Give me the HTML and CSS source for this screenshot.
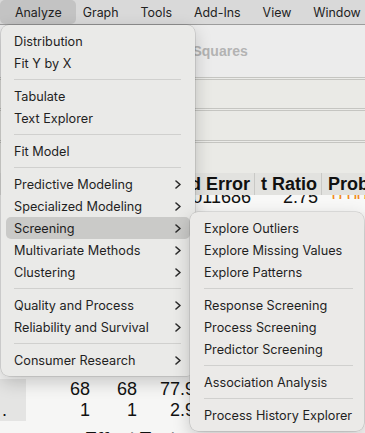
FILE: index.html
```html
<!DOCTYPE html>
<html>
<head>
<meta charset="utf-8">
<link rel="stylesheet" href="styles.css">
</head>
<body>
<div class="screen">
  <div class="menubar">
    <span class="mb-item active">Analyze</span>
    <span class="mb-item">Graph</span>
    <span class="mb-item">Tools</span>
    <span class="mb-item">Add-Ins</span>
    <span class="mb-item">View</span>
    <span class="mb-item">Window</span>
  </div>

  <div class="report">
    <div class="title">Fit Least Squares</div>
    <div class="rule"></div>
    <div class="band b1"></div>
    <div class="rule"></div>
    <div class="band b2"></div>
    <div class="rule"></div>
    <div class="band b3"></div>
    <div class="thead cols">
      <div class="c1">Std Error</div>
      <div class="c2">t Ratio</div>
      <div class="c3">Prob&gt;|t|</div>
    </div>
    <div class="vrow">
      <div class="cols vals">
        <div class="c1">0.011686</div>
        <div class="c2">2.75</div>
        <div class="c3 orange">0.0074*</div>
      </div>
    </div>
    <div class="filler"></div>
    <div class="rows">
      <div class="row">
        <div class="lab"></div>
        <div class="n n1">68</div>
        <div class="n n2">68</div>
        <div class="n n3">77.9</div>
      </div>
      <div class="row">
        <div class="lab">.</div>
        <div class="n n1">1</div>
        <div class="n n2">1</div>
        <div class="n n3">2.9</div>
      </div>
    </div>
    <div class="heading"><span class="tri"></span>Effect Tests</div>
  </div>

  <div class="menu main-menu">
    <div class="item">Distribution</div>
    <div class="item">Fit Y by X</div>
    <div class="sep"></div>
    <div class="item">Tabulate</div>
    <div class="item">Text Explorer</div>
    <div class="sep"></div>
    <div class="item">Fit Model</div>
    <div class="sep"></div>
    <div class="item">Predictive Modeling<svg class="chev" width="6" height="9" viewBox="0 0 6 9"><polyline points="1,1 5,4.5 1,8"/></svg></div>
    <div class="item">Specialized Modeling<svg class="chev" width="6" height="9" viewBox="0 0 6 9"><polyline points="1,1 5,4.5 1,8"/></svg></div>
    <div class="item selected">Screening<svg class="chev" width="6" height="9" viewBox="0 0 6 9"><polyline points="1,1 5,4.5 1,8"/></svg></div>
    <div class="item">Multivariate Methods<svg class="chev" width="6" height="9" viewBox="0 0 6 9"><polyline points="1,1 5,4.5 1,8"/></svg></div>
    <div class="item">Clustering<svg class="chev" width="6" height="9" viewBox="0 0 6 9"><polyline points="1,1 5,4.5 1,8"/></svg></div>
    <div class="sep"></div>
    <div class="item">Quality and Process<svg class="chev" width="6" height="9" viewBox="0 0 6 9"><polyline points="1,1 5,4.5 1,8"/></svg></div>
    <div class="item">Reliability and Survival<svg class="chev" width="6" height="9" viewBox="0 0 6 9"><polyline points="1,1 5,4.5 1,8"/></svg></div>
    <div class="sep"></div>
    <div class="item">Consumer Research<svg class="chev" width="6" height="9" viewBox="0 0 6 9"><polyline points="1,1 5,4.5 1,8"/></svg></div>
  </div>

  <div class="menu sub-menu">
    <div class="item">Explore Outliers</div>
    <div class="item">Explore Missing Values</div>
    <div class="item">Explore Patterns</div>
    <div class="sep"></div>
    <div class="item">Response Screening</div>
    <div class="item">Process Screening</div>
    <div class="item">Predictor Screening</div>
    <div class="sep"></div>
    <div class="item">Association Analysis</div>
    <div class="sep"></div>
    <div class="item">Process History Explorer</div>
  </div>
</div>
</body>
</html>
```

FILE: styles.css
```css
* { box-sizing: border-box; }

html, body {
  margin: 0;
  padding: 0;
}

body {
  font-family: "Liberation Sans", Arial, sans-serif;
  background: #f6f6f5;
}

.screen {
  position: relative;
  width: 365px;
  height: 433px;
  overflow: hidden;
  background: #f6f6f5;
}

/* ---------- menu bar ---------- */
.menubar {
  display: flex;
  height: 25px;
  background: #d9d9d9;
  border-bottom: 1px solid #9c9c9c;
  font-family: Inter, "Noto Sans", sans-serif;
  font-size: 12.4px;
  color: #222;
}

.mb-item {
  display: block;
  height: 24px;
  line-height: 24px;
  padding: 1px 11px 0;
  white-space: nowrap;
}

.mb-item.active {
  padding: 1px 14px 0 15px;
  margin-right: -4px;
  background: #c3c3c3;
  border-radius: 5px;
}

/* ---------- report background ---------- */
.report {
  display: flex;
  flex-direction: column;
}

.title {
  height: 52px;
  line-height: 52px;
  padding-left: 131px;
  background: #ececec;
  font-weight: bold;
  font-size: 14px;
  color: #b3b3b3;
  white-space: nowrap;
}

.rule {
  height: 3px;
  border-top: 1px solid #c5c5c1;
  border-bottom: 1px solid #c5c5c1;
  background: #ebebe8;
}

.band { background: #eaeae6; }
.b1 { height: 28px; }
.b2 { height: 29px; }
.b3 { height: 30px; }

.cols {
  display: grid;
  grid-template-columns: 255px 67px 1fr;
  font-size: 18px;
  white-space: nowrap;
}

.cols .c1 { text-align: right; padding-right: 4px; }
.cols .c2 { text-align: right; padding-right: 4px; }
.cols .c3 { padding-left: 6px; overflow: hidden; }

.thead {
  position: relative;
  z-index: 1;
  height: 22px;
  line-height: 22px;
  background: #e2e2df;
  font-weight: bold;
  color: #111;
}

.thead .c1, .thead .c2 { border-right: 1px solid #c9c9c6; }

.vrow {
  height: 17px;
  overflow: hidden;
  background: #f8f8f7;
}

.vals {
  line-height: 4px;
  color: #111;
}

.vals .c3 { padding-left: 10px; }

.orange { color: #f08a1c; }

.filler {
  height: 167px;
  background: #f6f6f5;
}

.rows {
  display: flex;
  flex-direction: column;
  font-size: 18px;
  color: #111;
}

.row {
  display: grid;
  grid-template-columns: 26px 64px 47px 58px 1fr;
  height: 21px;
  line-height: 21px;
}

.lab {
  background: #e4e4e3;
  padding-left: 2px;
}

.n { text-align: right; }

.heading {
  margin-top: 7px;
  height: 22px;
  line-height: 22px;
  font-size: 18px;
  font-weight: bold;
  color: #111;
  padding-left: 13px;
  display: flex;
  align-items: center;
  white-space: nowrap;
}

.tri {
  width: 0;
  height: 0;
  border-left: 6px solid transparent;
  border-right: 6px solid transparent;
  border-top: 10px solid #333;
  margin-right: 60px;
}

/* ---------- menus ---------- */
.menu {
  position: absolute;
  padding: 5px 0;
  background: #eaeae8;
  border-radius: 8px;
  box-shadow: 0 0 0 0.5px rgba(0, 0, 0, 0.18), 0 6px 18px rgba(0, 0, 0, 0.2);
  font-family: Inter, "Noto Sans", sans-serif;
  font-size: 12.7px;
  color: #1f1f1f;
}

.main-menu {
  left: 1px;
  top: 25px;
  width: 194px;
  z-index: 2;
}

.sub-menu {
  left: 190px;
  top: 212px;
  width: 174px;
  z-index: 3;
  background: #ebeae8;
}

.item {
  display: flex;
  align-items: center;
  justify-content: space-between;
  height: 22px;
  line-height: 21px;
  margin: 0 5px;
  padding: 1px 9px 0 8px;
  border-radius: 5px;
  white-space: nowrap;
}

.item.selected { background: #cacac8; }

.chev {
  fill: none;
  stroke: #2a2a2a;
  stroke-width: 1.6;
  stroke-linecap: round;
  stroke-linejoin: round;
}

.sep {
  height: 11px;
  display: flex;
  align-items: center;
  margin: 0 14px 0 13px;
}

.sep::before {
  content: "";
  flex: 1;
  height: 1px;
  background: #d0d0ce;
}

.sub-menu .item { padding-left: 9px; }
.sub-menu .sep { margin: 0 11px 0 14px; }
```
